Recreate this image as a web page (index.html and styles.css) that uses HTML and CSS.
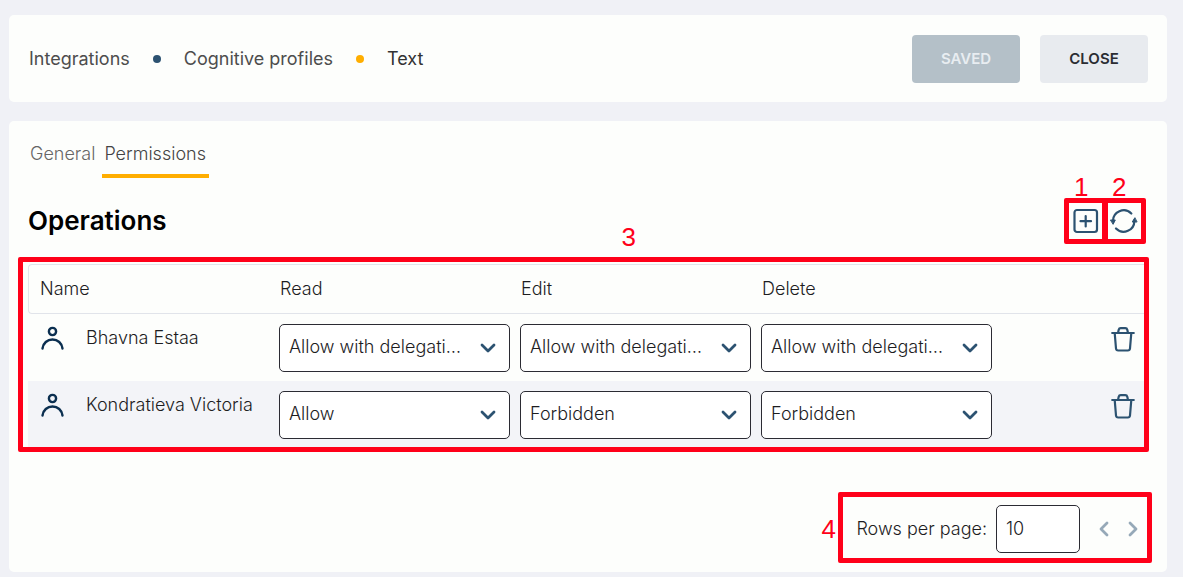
FILE: index.html
```html
<!DOCTYPE html>
<html lang="en">
<head>
    <meta charset="UTF-8">
    <meta name="viewport" content="width=device-width, initial-scale=1.0">
    <title>Cognitive profiles - Permissions</title>
    <link rel="stylesheet" href="styles.css">
</head>
<body>

<svg class="sprite" aria-hidden="true">
    <symbol id="user" viewBox="0 0 24 24">
        <circle cx="12.500" cy="5.500" r="3.600"/>
        <path d="M2.500 22.500c.6-5.300 4.800-9 10-9s9.400 3.700 10 9"/>
    </symbol>
    <symbol id="chevron" viewBox="0 0 16 16">
        <path d="M2 5l6 6 6-6"/>
    </symbol>
    <symbol id="trash" viewBox="0 0 24 26">
        <path d="M1.200 7h21.600M3.700 7l1.300 15.500q.2 2 2.200 2h9.600q2 0 2.200-2L20.300 7M7 7l.7-3.200q.4-1.600 2-1.600h4.600q1.600 0 2 1.600L17 7"/>
    </symbol>
</svg>

<header class="card topbar">
    <nav class="breadcrumbs" aria-label="Breadcrumb">
        <a href="#">Integrations</a>
        <span class="dot"></span>
        <a href="#">Cognitive profiles</a>
        <span class="dot dot-active"></span>
        <span class="current">Text</span>
    </nav>
    <div class="buttons">
        <button type="button" class="btn btn-saved" disabled>SAVED</button>
        <button type="button" class="btn">CLOSE</button>
    </div>
</header>

<main class="card content">
    <nav class="tabs">
        <a href="#" class="tab">General</a>
        <a href="#" class="tab tab-active">Permissions</a>
    </nav>

    <div class="section-head">
        <h1>Operations</h1>
        <div class="tools">
            <button type="button" class="icon-btn marked" aria-label="Add">
                <svg class="icon-tool" viewBox="0 0 28 28">
                    <rect x="2.500" y="3" width="22.500" height="22" rx="2.500"/>
                    <path d="M13.700 9v10.500M8.500 14.200h10.500"/>
                </svg>
                <span class="mark mark-tool"></span>
                <span class="mark-label label-top">1</span>
            </button>
            <button type="button" class="icon-btn marked" aria-label="Refresh">
                <svg class="icon-tool" viewBox="0 0 28 28">
                    <path d="M3 14.500A10.700 10.700 0 0 1 21.300 6.500M24.300 13.500A10.700 10.700 0 0 1 6 21.500"/>
                    <path class="solid" d="M.8 13h4.500l-2 4zM26.700 15h-4.500l2.500-4z"/>
                </svg>
                <span class="mark mark-tool"></span>
                <span class="mark-label label-top">2</span>
            </button>
        </div>
    </div>

    <div class="marked">
        <table class="permissions">
            <thead>
                <tr>
                    <th scope="col">Name</th>
                    <th scope="col">Read</th>
                    <th scope="col">Edit</th>
                    <th scope="col">Delete</th>
                    <th class="col-action"></th>
                </tr>
            </thead>
            <tbody>
                <tr>
                    <td>
                        <div class="person"><svg class="icon-user"><use href="#user"/></svg>Bhavna Estaa</div>
                    </td>
                    <td>
                        <div class="select"><select aria-label="Read, Bhavna Estaa"><option>Allow with delegation</option><option>Allow</option><option>Forbidden</option></select><svg class="chevron"><use href="#chevron"/></svg></div>
                    </td>
                    <td>
                        <div class="select"><select aria-label="Edit, Bhavna Estaa"><option>Allow with delegation</option><option>Allow</option><option>Forbidden</option></select><svg class="chevron"><use href="#chevron"/></svg></div>
                    </td>
                    <td>
                        <div class="select"><select aria-label="Delete, Bhavna Estaa"><option>Allow with delegation</option><option>Allow</option><option>Forbidden</option></select><svg class="chevron"><use href="#chevron"/></svg></div>
                    </td>
                    <td class="col-action">
                        <button type="button" class="icon-btn" aria-label="Remove Bhavna Estaa"><svg class="icon-trash"><use href="#trash"/></svg></button>
                    </td>
                </tr>
                <tr>
                    <td>
                        <div class="person"><svg class="icon-user"><use href="#user"/></svg>Kondratieva Victoria</div>
                    </td>
                    <td>
                        <div class="select"><select aria-label="Read, Kondratieva Victoria"><option>Allow with delegation</option><option selected>Allow</option><option>Forbidden</option></select><svg class="chevron"><use href="#chevron"/></svg></div>
                    </td>
                    <td>
                        <div class="select"><select aria-label="Edit, Kondratieva Victoria"><option>Allow with delegation</option><option>Allow</option><option selected>Forbidden</option></select><svg class="chevron"><use href="#chevron"/></svg></div>
                    </td>
                    <td>
                        <div class="select"><select aria-label="Delete, Kondratieva Victoria"><option>Allow with delegation</option><option>Allow</option><option selected>Forbidden</option></select><svg class="chevron"><use href="#chevron"/></svg></div>
                    </td>
                    <td class="col-action">
                        <button type="button" class="icon-btn" aria-label="Remove Kondratieva Victoria"><svg class="icon-trash"><use href="#trash"/></svg></button>
                    </td>
                </tr>
            </tbody>
        </table>
        <span class="mark mark-table"></span>
        <span class="mark-label label-table">3</span>
    </div>

    <div class="pagination marked">
        <label for="rowsPerPage">Rows per page:</label>
        <input type="text" id="rowsPerPage" value="10">
        <div class="pager">
            <button type="button" class="icon-btn" aria-label="Previous page"><svg class="chevron-page prev"><use href="#chevron"/></svg></button>
            <button type="button" class="icon-btn" aria-label="Next page"><svg class="chevron-page next"><use href="#chevron"/></svg></button>
        </div>
        <span class="mark mark-pages"></span>
        <span class="mark-label label-pages">4</span>
    </div>
</main>

</body>
</html>
```
FILE: styles.css
```css
* {
    box-sizing: border-box;
}
body {
    margin: 0;
    padding: 15px 16px 5px 9px;
    background: #f0f1f6;
    color: #1d1d1f;
    font-family: Inter, "Open Sans", sans-serif;
    font-size: 18px;
    font-weight: 300;
    line-height: 24px;
}
a {
    color: inherit;
    text-decoration: none;
}
svg {
    display: block;
    fill: none;
    stroke: #2c5271;
    stroke-width: 2.2;
    stroke-linecap: round;
    stroke-linejoin: round;
}
.sprite {
    position: absolute;
    width: 0;
    height: 0;
}
.card {
    background: #fdfefc;
    border-radius: 5px;
}

/* top bar */
.topbar {
    display: flex;
    justify-content: space-between;
    align-items: center;
    padding: 20px 19px 19px 20px;
    margin-bottom: 19px;
}
.breadcrumbs {
    display: flex;
    align-items: center;
    gap: 23px;
    color: #4d4d4d;
    font-weight: 400;
}
.current {
    color: #333;
}
.dot {
    width: 8px;
    height: 8px;
    border-radius: 50%;
    background: #2c5271;
}
.dot-active {
    background: #ffae00;
}
.buttons {
    display: flex;
    gap: 20px;
}
.btn {
    width: 108px;
    height: 48px;
    padding: 0 6px 2px;
    border: none;
    border-radius: 4px;
    background: #e8ebef;
    color: #2b2d33;
    font-family: inherit;
    font-size: 15px;
    font-weight: 600;
    cursor: pointer;
}
.btn-saved {
    background: #b4c0c8;
    color: #e8edf1;
}

/* tabs and heading */
.content {
    padding: 20px 19px 19px;
}
.tabs {
    display: flex;
    gap: 4px;
}
.tab {
    padding: 1px 3px 8px 2px;
    border-bottom: 4px solid transparent;
    color: #666;
}
.tab-active {
    border-color: #ffae00;
    color: #444;
}
.section-head {
    display: flex;
    justify-content: space-between;
    align-items: center;
    padding: 28px 10px 28px 0;
}
h1 {
    margin: 0;
    color: #000;
    font-size: 26px;
    font-weight: 600;
    line-height: 30px;
}
.tools {
    display: flex;
    gap: 10px;
}
.icon-btn {
    padding: 0;
    border: none;
    background: none;
    cursor: pointer;
}
.icon-tool {
    width: 28px;
    height: 28px;
}
.solid {
    fill: #2c5271;
    stroke-width: 1;
}

/* permissions table */
.permissions {
    width: 100%;
    table-layout: fixed;
    border-collapse: separate;
    border-spacing: 0;
}
th {
    height: 50px;
    padding: 0 11px;
    border: solid #e1e4ea;
    border-width: 1px 0;
    font-weight: 300;
    text-align: left;
}
th:first-child {
    border-left-width: 1px;
    border-radius: 4px 0 0 4px;
}
th:last-child {
    border-right-width: 1px;
    border-radius: 0 4px 4px 0;
}
td {
    padding: 10px 0 9px 10px;
    vertical-align: top;
}
tbody tr:nth-child(even) {
    background: #f3f4f8;
}
.person {
    display: flex;
    gap: 22px;
    padding: 2px;
    white-space: nowrap;
}
.icon-user {
    width: 24px;
    height: 24px;
    stroke: #0b2f50;
    stroke-width: 2.4;
}
.col-action {
    width: 156px;
}
td.col-action {
    padding: 12px 13px 0 0;
    text-align: right;
}
.icon-trash {
    width: 24px;
    height: 26px;
}
.select {
    position: relative;
}
select,
input {
    height: 48px;
    padding: 0 10px 2px 9px;
    border: 1px solid #2b2b33;
    border-radius: 5px;
    background: #fff;
    color: #1d1d1f;
    font: inherit;
}
select {
    width: 100%;
    padding-right: 48px;
    appearance: none;
    text-overflow: ellipsis;
}
.chevron {
    position: absolute;
    top: 16px;
    right: 14px;
    width: 16px;
    height: 16px;
    stroke-width: 2.8;
    pointer-events: none;
}

/* pagination */
.pagination {
    display: flex;
    justify-content: flex-end;
    align-items: center;
    gap: 9px;
    padding-right: 7px;
    margin-top: 57px;
}
.pagination input {
    width: 84px;
}
.pager {
    display: flex;
    gap: 13px;
    padding-left: 7px;
}
.chevron-page {
    width: 16px;
    height: 16px;
    stroke: #96a9b8;
    stroke-width: 2.8;
}
.prev {
    transform: rotate(90deg);
}
.next {
    transform: rotate(-90deg);
}

/* numbered callouts */
.marked {
    position: relative;
}
.mark {
    position: absolute;
    border: 5px solid #ff0019;
    border-radius: 2px;
    pointer-events: none;
}
.mark-label {
    position: absolute;
    color: #ff0019;
    font-family: "Liberation Sans", Arial, sans-serif;
    font-size: 26px;
    font-weight: 400;
    line-height: 30px;
}
.mark-tool {
    inset: -9px -8px;
}
.label-top {
    top: -35px;
    left: 2px;
}
.mark-table {
    inset: -7px -1px -4px -10px;
}
.label-table {
    top: -42px;
    left: 53%;
}
.mark-pages {
    inset: -13px -4px -10px auto;
    width: 314px;
}
.label-pages {
    right: 312px;
}
```
